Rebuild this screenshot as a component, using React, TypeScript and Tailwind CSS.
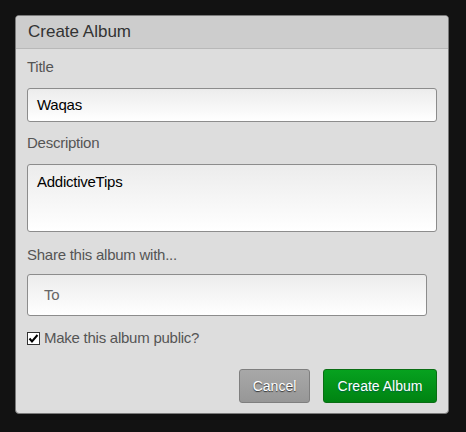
import { useState } from "react";

const font = { fontFamily: '"Liberation Sans", Arial, sans-serif' };

export default function App() {
  const [isPublic, setIsPublic] = useState(true);

  return (
    <div className="h-[432px] w-[466px] bg-[#121212] pl-[15px] pt-[15px]" style={font}>
      <div className="flex h-[399px] w-[434px] flex-col overflow-hidden rounded-[4px] border border-[#7a7a7a] bg-[#dddddd]">
        <div className="flex h-[33px] items-center border-b border-[#b8b8b8] bg-[#cdcdcd] px-[12px] text-[17px] text-[#333]">
          Create Album
        </div>
        <div className="flex flex-1 flex-col px-[11px] text-[15px] tracking-[-0.25px]">
          <label className="mt-[8px] leading-[20px] text-[#555]">Title</label>
          <div className="mt-[11px] flex h-[34px] w-[410px] items-center rounded-[3px] border border-[#8c8c8c] bg-gradient-to-b from-[#ececec] to-white px-[9px] text-black">
            Waqas
          </div>
          <label className="mt-[11px] leading-[20px] text-[#555]">Description</label>
          <div className="mt-[11px] h-[68px] w-[410px] rounded-[3px] border border-[#8c8c8c] bg-gradient-to-b from-[#ececec] to-white px-[9px] pt-[7px] leading-[20px] text-black">
            AddictiveTips
          </div>
          <label className="mt-[13px] leading-[20px] text-[#555]">Share this album with...</label>
          <div className="mt-[9px] flex h-[42px] w-[400px] items-center rounded-[3px] border border-[#8c8c8c] bg-gradient-to-b from-[#ececec] to-white px-[16px] text-[#666]">
            To
          </div>
          <label className="mt-[12px] flex items-center gap-[4px] leading-[20px] text-[#555]">
            <button
              type="button"
              onClick={() => setIsPublic(!isPublic)}
              className="flex h-[13px] w-[13px] items-center justify-center border border-[#333] bg-white"
            >
              {isPublic && (
                <svg width="11" height="11" viewBox="0 0 11 11">
                  <path d="M1.5 5.5 L4 8.5 L9.5 2" fill="none" stroke="#000" strokeWidth="2" />
                </svg>
              )}
            </button>
            Make this album public?
          </label>
          <div className="mt-[21px] flex justify-end gap-[13px] tracking-normal">
            <button
              type="button"
              className="h-[34px] w-[71px] rounded-[3px] border border-[#7f7f7f] bg-gradient-to-b from-[#a8a8a8] to-[#979797] text-[14px] text-white [text-shadow:0_1px_1px_#333]"
            >
              Cancel
            </button>
            <button
              type="button"
              className="h-[34px] w-[114px] rounded-[3px] border border-[#0a6e14] bg-gradient-to-b from-[#07a21f] to-[#008312] text-[14px] text-white [text-shadow:0_1px_1px_#064]"
            >
              Create Album
            </button>
          </div>
        </div>
      </div>
    </div>
  );
}
